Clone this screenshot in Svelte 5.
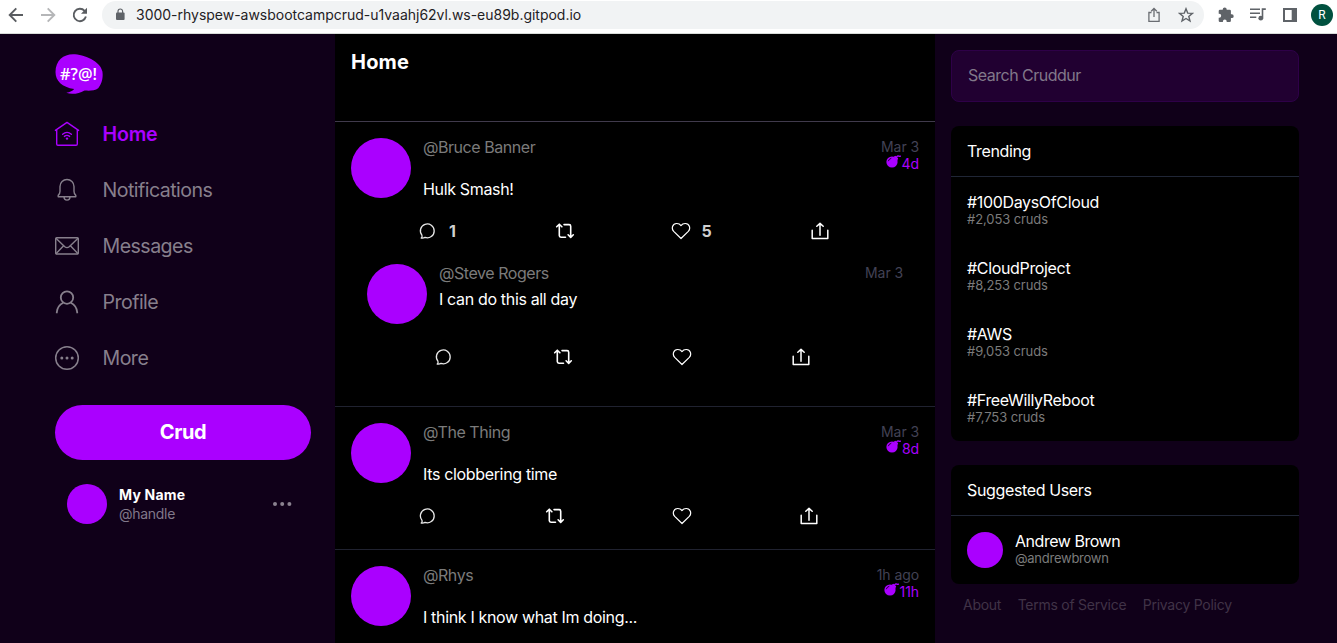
<script>
  const nav = [
    { icon: 'home', label: 'Home', active: true },
    { icon: 'bell', label: 'Notifications' },
    { icon: 'mail', label: 'Messages' },
    { icon: 'user', label: 'Profile' },
    { icon: 'more', label: 'More' }
  ];

  const activities = [
    {
      handle: 'Bruce Banner', message: 'Hulk Smash!', created: 'Mar 3', expires: '4d',
      columns: [137, 115.5, 139.5], replies: 1, likes: 5,
      reply: { handle: 'Steve Rogers', message: 'I can do this all day', created: 'Mar 3', columns: [119, 119, 119] }
    },
    { handle: 'The Thing', message: 'Its clobbering time', created: 'Mar 3', expires: '8d', columns: [127, 127, 127] },
    { handle: 'Rhys', message: 'I think I know what Im doing...', created: '1h ago', expires: '11h', columns: [127, 127, 127] }
  ];

  const trends = [
    { tag: '100DaysOfCloud', count: '2,053' },
    { tag: 'CloudProject', count: '8,253' },
    { tag: 'AWS', count: '9,053' },
    { tag: 'FreeWillyReboot', count: '7,753' }
  ];
</script>

{#snippet navIcon(name)}
  <svg class="nav-icon" width="26" height="26" viewBox="0 0 26 26" fill="none" stroke="currentColor" stroke-width="1.4" stroke-linecap="round" stroke-linejoin="round">
    {#if name === 'home'}
      <path d="M1.4 9.4 13 1.4 24.6 9.4M2.7 8.7v14.200a1.300 1.300 0 0 0 1.300 1.300h18a1.300 1.300 0 0 0 1.300-1.300V8.700M8.600 13.200q4.400-3.600 8.800 0M10.400 15.400q2.600-2 5.200 0" />
      <circle cx="13" cy="17.6" r="1.2" fill="currentColor" stroke="none" />
    {:else if name === 'bell'}
      <path d="M4.200 19.800v-1.400q1.800-1.500 1.800-4.100V9.500a7 7 0 0 1 14 0v4.800q0 2.600 1.800 4.100v1.400ZM10 20.100a3 3 0 0 0 6 0" />
    {:else if name === 'mail'}
      <rect x="1.700" y="4.800" width="22.600" height="16.200" rx="1" />
      <path d="m2.200 5.400 8.600 8.300q2.200 1.800 4.400 0l8.600-8.300M2.200 20.400l7.400-7.700M23.800 20.400l-7.400-7.700" />
    {:else if name === 'user'}
      <circle cx="13" cy="8.600" r="6.200" stroke-width="1.800" />
      <path d="M2.800 24.200v-1q.5-6.500 6.500-9.500M23.200 24.200v-1q-.5-6.500-6.500-9.500" stroke-width="1.800" stroke-linecap="butt" />
    {:else}
      <circle cx="13" cy="13" r="11.300" stroke-width="1.500" />
      <g fill="currentColor" stroke="none"><circle cx="7.800" cy="13" r="1.500" /><circle cx="13" cy="13" r="1.500" /><circle cx="18.200" cy="13" r="1.500" /></g>
    {/if}
  </svg>
{/snippet}

{#snippet actions(item)}
  <div class="actions" style:grid-template-columns={item.columns.map((c) => c + 'px').join(' ') + ' 1fr'}>
    <div class="action">
      <svg width="20" height="20" viewBox="0 0 20 20" fill="none" stroke="#e8e8e8" stroke-width="1.300" stroke-linejoin="round"><path d="M3.200 17Q4.600 16 3.900 14.200A6.900 6.900 0 1 1 7 16.400Q5.400 17.300 3.200 17Z" /></svg>
      {#if item.replies}<span class="counter">{item.replies}</span>{/if}
    </div>
    <div class="action">
      <svg width="20" height="20" viewBox="0 0 20 20" fill="none" stroke="#fff" stroke-width="1.600" stroke-linecap="round" stroke-linejoin="round"><path d="M4.300 3.600V14.600a1.600 1.600 0 0 0 1.600 1.600h4.600M1.700 5.800l2.600-2.600 2.600 2.600M9 3.600h5.100a1.600 1.600 0 0 1 1.600 1.600v11M13.100 13.800l2.600 2.600 2.600-2.600" /></svg>
    </div>
    <div class="action">
      <svg width="20" height="20" viewBox="0 0 20 20" fill="none" stroke="#fff" stroke-width="1.200" stroke-linejoin="round"><path d="M10 17.500 2.700 10.400C-.1 7.300 1.800 2.600 5.500 2.500 7.600 2.400 9.200 3.400 10 4.600 10.800 3.400 12.400 2.400 14.500 2.500 18.200 2.600 20.100 7.300 17.300 10.400Z" /></svg>
      {#if item.likes}<span class="counter">{item.likes}</span>{/if}
    </div>
    <div class="action">
      <svg width="20" height="20" viewBox="0 0 20 20" fill="none" stroke="#fff" stroke-width="1.500" stroke-linecap="round" stroke-linejoin="round"><path d="M2.200 9.200v8.300h15.600V9.200M10 14.200V2.800M6.800 5.300 10 2.400l3.200 2.900" /></svg>
    </div>
  </div>
{/snippet}

{#snippet meta(item)}
  <div class="meta">
    <span class="handle">@{item.handle}</span>
    <div class="times">
      <div>{item.created}</div>
      {#if item.expires}
        <div class="expires">
          <svg width="15" height="13" viewBox="0 0 15 13"><circle cx="6" cy="7" r="5.600" fill="#a0f" /><path d="m7.500 1.700 2-1 2.600 2.600-.8 2.500Z" fill="#a0f" /><path d="M10.300 2.500q1-2.200 2.500-1.400 1 .7 1.900-.3" fill="none" stroke="#a0f" stroke-width="1.400" /><path d="M2.300 6.200Q3 3.800 5.300 3.300" fill="none" stroke="#000" stroke-width=".8" /></svg>
          <span>{item.expires}</span>
        </div>
      {/if}
    </div>
  </div>
{/snippet}

<div class="window">
  <header class="toolbar">
    <svg width="16" height="16" viewBox="0 0 16 16" fill="none" stroke="#5a5d61" stroke-width="1.900"><path d="M15 8H2.200M8.300 1.400 1.700 8l6.600 6.600" /></svg>
    <svg class="forward" width="16" height="16" viewBox="0 0 16 16" fill="none" stroke="#b5b6b8" stroke-width="1.900"><path d="M1 8h12.800M7.700 1.400 14.300 8l-6.600 6.600" /></svg>
    <svg class="reload" width="16" height="16" viewBox="0 0 16 16" fill="none" stroke="#5a5d61" stroke-width="1.900"><path d="M13.900 9.600A6.200 6.200 0 1 1 12.600 3.900L14 5.300" /><path d="M15 .8v6H9Z" fill="#5a5d61" stroke="none" /></svg>
    <div class="address">
      <svg width="10" height="13" viewBox="0 0 10 13"><rect x="1" y="4.400" width="8.600" height="7.600" rx="1" fill="#5f6368" /><path d="M3 5V3.300a2.300 2.300 0 0 1 4.600 0V5" fill="none" stroke="#5f6368" stroke-width="1.200" /></svg>
      <span class="url">3000-rhyspew-awsbootcampcrud-u1vaahj62vl.ws-eu89b.gitpod.io</span>
      <svg width="14" height="16" viewBox="0 0 14 16" fill="none" stroke="#6a6d72" stroke-width="1.300"><path d="M4.500 5.500H1.900v8.800h10.200V5.500H9.500M7 10V1.800M4.200 4.200 7 1.500l2.800 2.700" /></svg>
      <svg class="star" width="16" height="16" viewBox="0 0 16 16" fill="none" stroke="#5f6368" stroke-width="1.400"><path d="m8 1.800 1.700 4.300 4.700.3-3.600 3 1.200 4.600L8 11.500 4 14l1.200-4.600-3.600-3 4.700-.3Z" /></svg>
    </div>
    <svg class="ext" width="16" height="16" viewBox="0 0 16 16"><path fill="#5f6368" d="M13.800 7.300h-.9V4.100a1.300 1.300 0 0 0-1.300-1.300H8.700V2.500a2 2 0 0 0-4 0v.3H2A1.300 1.300 0 0 0 .7 4.100v2.700h.5a2 2 0 0 1 0 4H.7v3A1.300 1.300 0 0 0 2 15.100h2.900v-.7a1.900 1.900 0 0 1 3.800 0v.7h2.900a1.300 1.300 0 0 0 1.300-1.300v-2.700h.9a1.900 1.900 0 0 0 0-3.800Z" /></svg>
    <svg class="queue" width="17" height="15" viewBox="0 0 17 15" fill="none" stroke="#5f6368" stroke-width="1.600"><path d="M0 2.200h10M0 6.200h10M0 10.200h6.300M15.800 2.100H12.500V11" /><circle cx="10.800" cy="11.200" r="2.400" fill="#5f6368" stroke="none" /></svg>
    <svg class="panel" width="14" height="14" viewBox="0 0 14 14"><path fill="#5f6368" fill-rule="evenodd" d="M0 0h14v14H0ZM2 2v10h6.700V2Z" /></svg>
    <span class="account">R</span>
  </header>

  <div class="app">
    <nav class="sidebar">
      <svg class="logo" width="48" height="40" viewBox="0 0 48 40">
        <path fill="#a0f" d="M.5 18C.5 6.500 8.500.2 18 .2 29 .2 45.500 7 47.400 17.500 48.500 25 46 31 43.200 34.200 39.500 37.600 31.500 36.300 29 36.700 24.500 39.600 16.500 40.800 11.300 38.800 15 38.200 18 37 19.200 35.100 7 33 .5 27 .5 18Z" />
        <text x="5" y="26" textLength="37" lengthAdjust="spacingAndGlyphs">#?@!</text>
      </svg>
      {#each nav as item}
        <a class="nav-item" class:active={item.active}>{@render navIcon(item.icon)}<span>{item.label}</span></a>
      {/each}
      <button class="crud">Crud</button>
      <div class="profile">
        <div class="avatar small"></div>
        <div class="who"><b>My Name</b><span>@handle</span></div>
        <svg width="20" height="6" viewBox="0 0 20 6" fill="#8b8290"><circle cx="3" cy="3" r="2" /><circle cx="10.200" cy="3" r="2" /><circle cx="17.400" cy="3" r="2" /></svg>
      </div>
    </nav>

    <main class="feed">
      <div class="feed-head">Home</div>
      {#each activities as item}
        <article class="activity" class:threaded={item.reply}>
          <div class="row">
            <div class="avatar"></div>
            <div class="content">{@render meta(item)}<div class="message">{item.message}</div></div>
          </div>
          {@render actions(item)}
          {#if item.reply}
            <div class="reply">
              <div class="row">
                <div class="avatar"></div>
                <div class="content">{@render meta(item.reply)}<div class="message">{item.reply.message}</div></div>
              </div>
              {@render actions(item.reply)}
            </div>
          {/if}
        </article>
      {/each}
    </main>

    <aside class="rail">
      <div class="search">Search Cruddur</div>
      <section class="card">
        <h2>Trending</h2>
        {#each trends as t}
          <div class="trend"><div class="title">#{t.tag}</div><div class="sub">#{t.count} cruds</div></div>
        {/each}
      </section>
      <section class="card">
        <h2>Suggested Users</h2>
        <div class="suggested">
          <div class="avatar mini"></div>
          <div><div class="title name">Andrew Brown</div><div class="sub tight">@andrewbrown</div></div>
        </div>
      </section>
      <footer class="links"><span>About</span><span>Terms of Service</span><span>Privacy Policy</span></footer>
    </aside>
  </div>
</div>

<style>
  :global(body) { margin: 0; overflow: hidden; }
  .window { width: 1337px; height: 643px; display: flex; flex-direction: column; overflow: hidden; font-family: Inter, sans-serif; background: #100019; }
  svg { display: block; flex: none; }

  .toolbar { box-sizing: border-box; flex: none; height: 34px; display: flex; align-items: center; padding: 0 4px 4px 8px; background: #fff; border-bottom: 1px solid #d8dcd9; }
  .forward { margin-left: 16px; }
  .reload { margin-left: 16px; }
  .address { box-sizing: border-box; margin-left: 14px; width: 1102px; height: 28px; border-radius: 14px; background: #f1f3f4; display: flex; align-items: center; padding: 0 10px 0 13px; }
  .url { flex: 1; margin-left: 11px; font-size: 14px; line-height: 20px; color: #1f2124; letter-spacing: -.015px; }
  .star { margin-left: 17px; }
  .ext { margin-left: 14px; }
  .queue { margin-left: 16px; }
  .panel { margin-left: 16px; }
  .account { margin-left: 14px; width: 22px; height: 22px; flex: none; border-radius: 50%; background: #00513f; color: #fff; font: 12px/22px Roboto, sans-serif; text-align: center; }

  .app { flex: 1; min-height: 0; display: flex; }
  .sidebar { box-sizing: border-box; width: 335px; flex: none; padding: 20px 24px 0 55px; }
  .logo { margin-bottom: 12px; }
  .logo text { font: 600 17px 'Open Sans', sans-serif; fill: #fff; }
  .nav-item { height: 56px; display: flex; align-items: center; color: #877f8c; font-size: 19.6px; letter-spacing: -.54px; }
  .nav-icon { margin: -1px 22.5px 0 -1px; }
  .active { color: #a0f; font-weight: 600; letter-spacing: -.2px; }
  .crud { display: block; width: 256px; height: 55px; margin-top: 19px; padding: 0 0 2px; border: 0; border-radius: 28px; background: #a0f; color: #fff; font: 700 20px Inter, sans-serif; letter-spacing: -.4px; }
  .profile { display: flex; align-items: center; margin-top: 24px; padding: 0 19px 0 12px; }
  .who { flex: 1; display: flex; flex-direction: column; margin-left: 12px; font-size: 14px; line-height: 19px; color: #81788a; letter-spacing: -.28px; }
  .who b { color: #fff; letter-spacing: .2px; }

  .avatar { width: 60px; height: 60px; flex: none; border-radius: 50%; background: #a0f; }
  .small { width: 40px; height: 40px; }
  .mini { width: 36px; height: 36px; }

  .feed { width: 600px; flex: none; background: #000; overflow: hidden; }
  .feed-head { box-sizing: border-box; height: 88px; padding: 16px; border-bottom: 1px solid #403a4c; color: #fff; font-size: 20px; font-weight: 700; line-height: 24px; letter-spacing: .2px; }
  .activity { box-sizing: border-box; height: 143px; padding: 16px; border-bottom: 1px solid #202230; }
  .threaded { height: 285px; }
  .row { display: flex; height: 83px; gap: 12px; }
  .content { flex: 1; }
  .meta { display: flex; justify-content: space-between; height: 41px; }
  .handle { font-size: 16px; line-height: 19px; color: #7b7b7b; letter-spacing: -.45px; }
  .times { font-size: 14px; line-height: 17px; color: #424255; text-align: right; letter-spacing: -.08px; }
  .expires { display: flex; justify-content: flex-end; gap: 1px; color: #a0f; }
  .message { font-size: 16px; line-height: 20px; color: #fff; letter-spacing: -.34px; }
  .actions { display: grid; padding-left: 67px; height: 20px; }
  .action { display: flex; align-items: center; }
  .counter { margin-left: 11px; color: #d0d0d0; font-size: 16px; font-weight: 700; line-height: 20px; }
  .reply { margin-top: 23px; padding: 0 16px; }
  .reply .meta { height: 25px; }

  .rail { flex: 1; padding: 16px 38px 0 16px; }
  .search { box-sizing: border-box; height: 52px; padding: 0 16px; border: 1px solid #2e0048; border-radius: 8px; background: #210031; color: #81788a; font-size: 16px; line-height: 49px; letter-spacing: -.5px; }
  .card { margin-top: 24px; border-radius: 8px; background: #000; color: #fff; }
  h2 { margin: 0; padding: 0 16px; height: 50px; border-bottom: 1px solid #202636; font-size: 16px; font-weight: 400; line-height: 51px; letter-spacing: -.36px; }
  .trend { padding: 16px; height: 34px; }
  .title { font-size: 16px; line-height: 18px; letter-spacing: -.34px; }
  .name { letter-spacing: -.47px; }
  .sub { font-size: 13px; line-height: 17px; color: #7b7b7b; letter-spacing: -.1px; }
  .tight { letter-spacing: -.25px; }
  .suggested { display: flex; gap: 12px; padding: 16px; height: 36px; }
  .links { display: flex; gap: 16.5px; padding: 12px; font-size: 14px; line-height: 18px; color: #403347; letter-spacing: -.26px; }
</style>
